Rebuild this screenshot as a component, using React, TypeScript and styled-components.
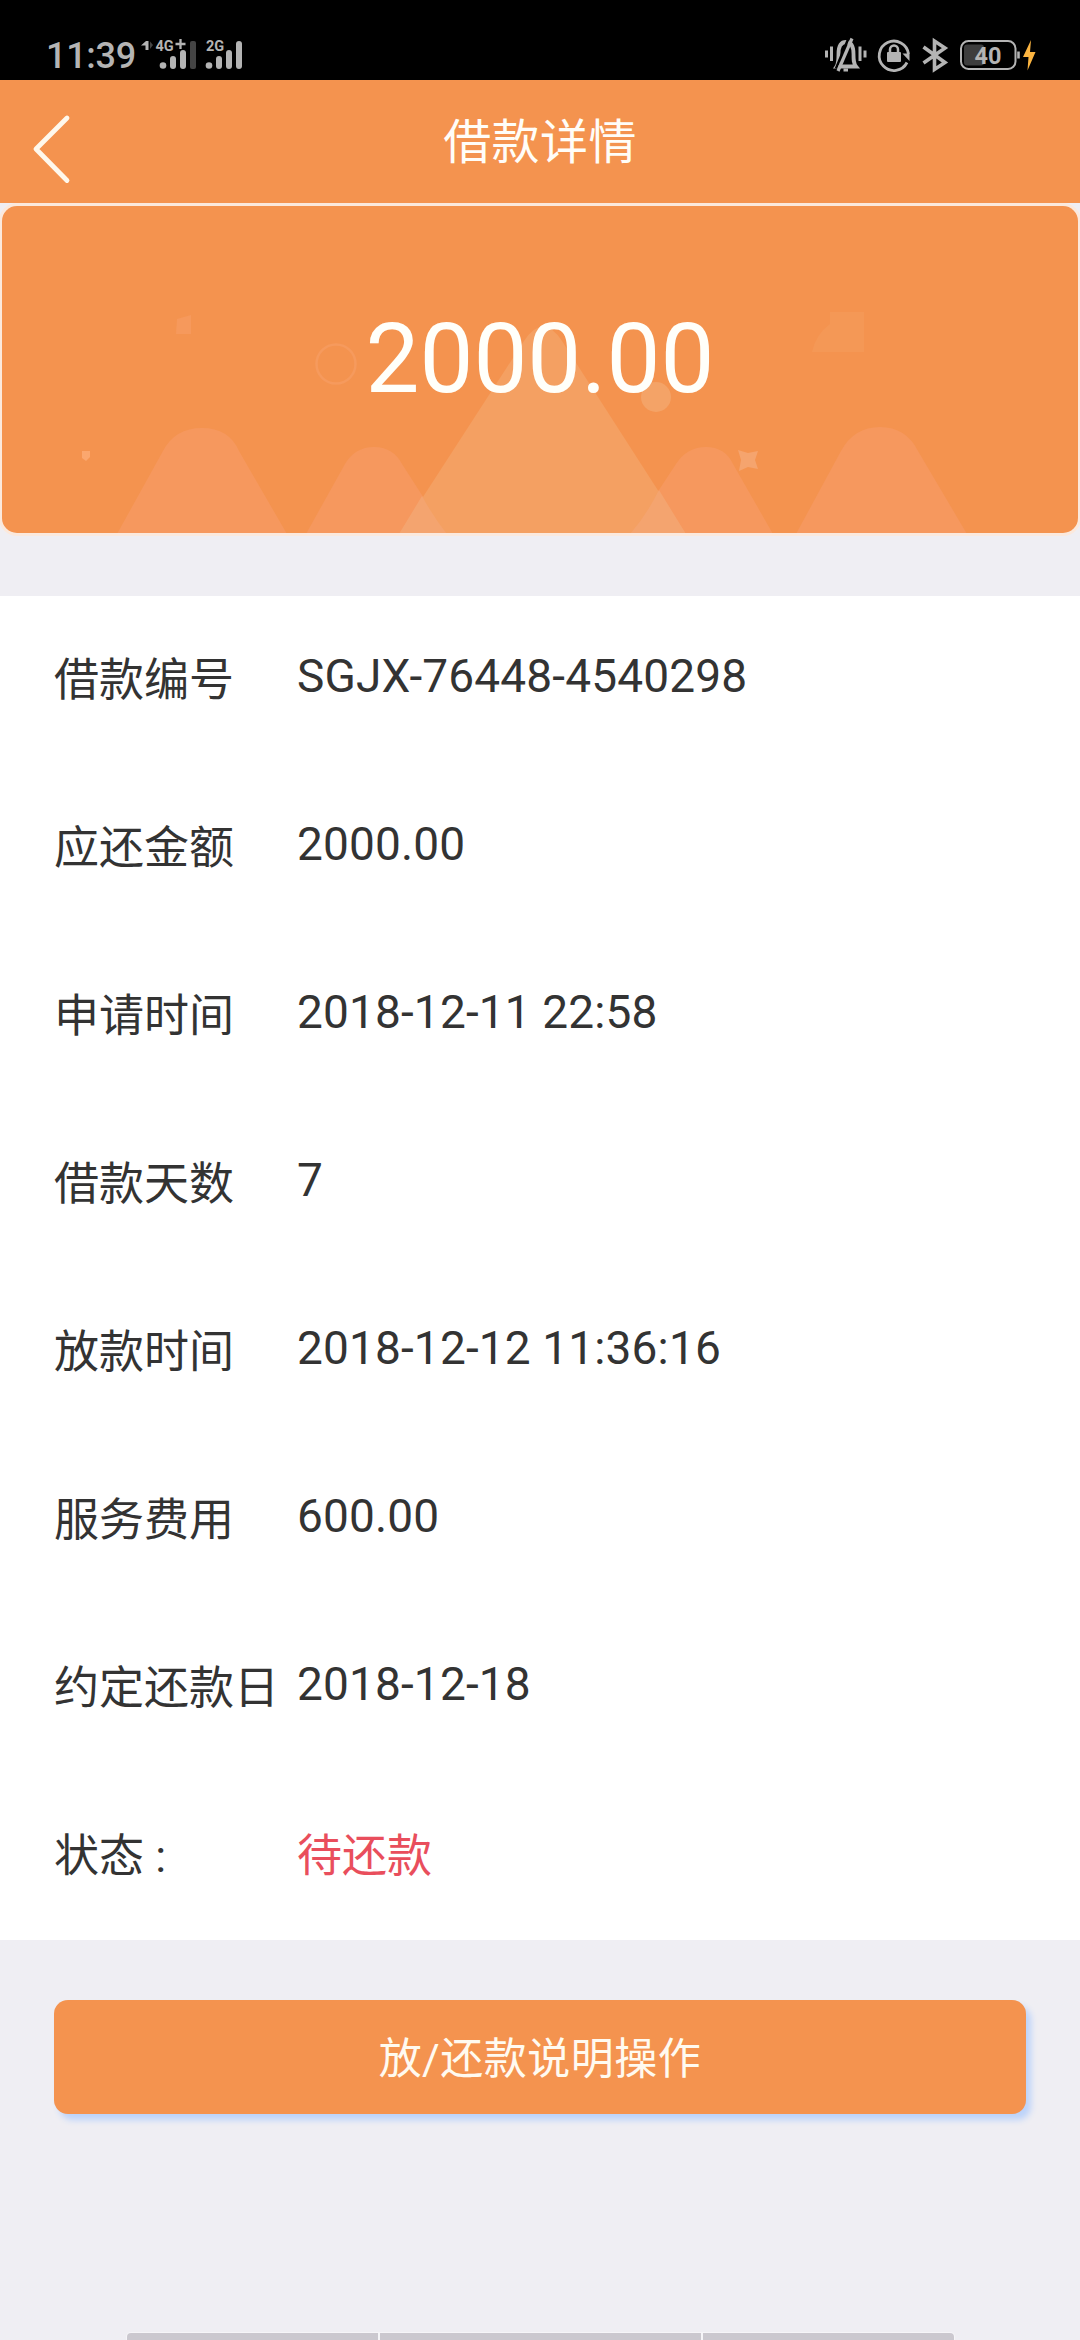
import React from 'react';
import styled, { createGlobalStyle } from 'styled-components';

const GlobalStyle = createGlobalStyle`
  * { box-sizing: border-box; }
  body {
    margin: 0;
    background: #efeef3;
    font-family: Roboto, "Noto Sans CJK SC", sans-serif;
  }
`;

const Screen = styled.div`
  width: 1080px;
  height: 2340px;
  display: flex;
  flex-direction: column;
  overflow: hidden;
  background: #efeef3;
`;

const StatusBar = styled.header`
  flex: none;
  height: 80px;
  padding: 0 43px 0 46px;
  display: flex;
  justify-content: space-between;
  background: #000;
  color: #b4b4b4;
`;

const StatusGroup = styled.div`
  display: flex;
`;

const Clock = styled.span`
  width: 94px;
  padding-top: 35px;
  font-size: 36px;
  font-weight: 500;
  line-height: 43px;
  letter-spacing: -0.3px;
`;

const StatusIcons = styled.svg`
  display: block;
  height: 80px;
`;

const NavBar = styled.nav`
  flex: none;
  height: 123px;
  display: grid;
  grid-template-columns: 240px 1fr 240px;
  background: #f4934f;
`;

const BackButton = styled.button`
  display: flex;
  align-items: flex-start;
  padding: 33px 0 0 31px;
  border: 0;
  background: none;
`;

const Title = styled.h1`
  margin: 0;
  padding-top: 27px;
  text-align: center;
  font-size: 48px;
  line-height: 72px;
  font-weight: 400;
  letter-spacing: 0.4px;
  color: #fffdf8;
`;

const Banner = styled.section`
  flex: none;
  height: 327px;
  margin: 3px 2px 0;
  display: grid;
  border-radius: 15px;
  overflow: hidden;
  background: #f4934f;
  box-shadow: 0 0 0 3px #fbe9dd;

  > * { grid-area: 1 / 1; }
`;

const Amount = styled.div`
  z-index: 1;
  padding-top: 97px;
  text-align: center;
  font-size: 96px;
  line-height: 112px;
  color: #fffffa;
`;

const Details = styled.dl`
  flex: none;
  margin: 63px 0 0;
  background: #fff;
`;

const Row = styled.div`
  height: 168px;
  padding-left: 54px;
  display: grid;
  grid-template-columns: 243px 1fr;
  color: #333;
  line-height: 66px;
`;

const Label = styled.dt`
  padding-top: 52px;
  font-size: 45px;
  white-space: nowrap;
`;

const Value = styled.dd<{ $alert?: boolean }>`
  margin: 0;
  padding-top: ${p => (p.$alert ? 52 : 47)}px;
  font-size: ${p => (p.$alert ? 45 : 46)}px;
  letter-spacing: ${p => (p.$alert ? 0 : 0.15)}px;
  color: ${p => (p.$alert ? '#e94e5c' : 'inherit')};
`;

const HelpButton = styled.button`
  flex: none;
  width: 972px;
  height: 114px;
  margin: 60px 0 0 54px;
  padding: 0 0 5px;
  border: 0;
  border-radius: 14px;
  background: #f4934f;
  box-shadow: 5px 6px 6px #bcd3fa;
  font-family: inherit;
  font-size: 43px;
  letter-spacing: 0.5px;
  color: #fffaf0;
`;

const GestureBar = styled.footer`
  margin-top: auto;
  height: 7px;
  padding: 0 126px 0 127px;
  display: grid;
  grid-template-columns: 251px 1fr 251px;
  gap: 2px;
`;

const GestureSegment = styled.span<{ $edge?: 'left' | 'right' }>`
  background: #cbc8cf;
  border-radius: ${p =>
    p.$edge === 'left' ? '4px 0 0 0' : p.$edge === 'right' ? '0 4px 0 0' : '0'};
  box-shadow: 0 0 0 1px #f6f5f8;
`;

const rows: { label: string; value: string; alert?: boolean }[] = [
  { label: '借款编号', value: 'SGJX-76448-4540298' },
  { label: '应还金额', value: '2000.00' },
  { label: '申请时间', value: '2018-12-11 22:58' },
  { label: '借款天数', value: '7' },
  { label: '放款时间', value: '2018-12-12 11:36:16' },
  { label: '服务费用', value: '600.00' },
  { label: '约定还款日', value: '2018-12-18' },
  { label: '状态 :', value: '待还款', alert: true },
];

function SignalIcons() {
  return (
    <StatusIcons width="120" viewBox="140 0 120 80" fill="#b4b4b4">
      <path d="M141 45.500l5-4.500h2.500v9h-3v-4.500z" />
      <path d="M150 41.500l3 3.500-3 4z" fill="#444" />
      <text x="155.500" y="50.500" fontSize="14.500" fontWeight="700" fontFamily="Roboto, sans-serif">4G</text>
      <path d="M180.500 39v10M175.500 44h10" stroke="#b4b4b4" strokeWidth="2.300" />
      <circle cx="163" cy="65.500" r="3.300" />
      <rect x="170" y="56" width="6" height="13" rx="3" />
      <rect x="180" y="50" width="6" height="19" rx="3" />
      <rect x="190" y="41" width="6" height="28" rx="2" fill="#444" />
      <text x="206" y="50.500" fontSize="14.500" fontWeight="700" fontFamily="Roboto, sans-serif">2G</text>
      <circle cx="209" cy="65.500" r="3.300" />
      <rect x="216" y="56" width="6" height="13" rx="3" />
      <rect x="226" y="50" width="6" height="19" rx="3" />
      <rect x="236" y="41" width="6" height="28" rx="3" />
    </StatusIcons>
  );
}

function DeviceIcons() {
  return (
    <StatusIcons width="215" viewBox="822 0 215 80" fill="none" stroke="#b4b4b4">
      <path d="M826.500 50.500v7M831.500 46.500v14.500M860 46.500v14.500M865 50.500v7" strokeWidth="3" />
      <path d="M836.500 66.500h19.500c-2.500-3-2.500-6-2.500-12.500 0-7-2-12-7.500-12s-7.500 5-7.500 12c0 6.500 0 9.500-2 12.500z" strokeWidth="3.800" />
      <path d="M836 68.500l12-29" stroke="#000" strokeWidth="2.500" />
      <path d="M838 71l14-32.500" strokeWidth="3.200" />
      <path d="M843.500 70h4.500" strokeWidth="3" />
      <path d="M907 62.500A14.700 14.700 0 1 1 908.500 54" strokeWidth="2.800" />
      <path d="M902.500 53.500h7v7.500z" fill="#b4b4b4" stroke="none" />
      <rect x="887" y="52" width="14" height="10" rx="1" fill="#b4b4b4" stroke="none" />
      <path d="M890 53v-3.500a4 4 0 0 1 8 0V53" strokeWidth="2.500" />
      <path d="M923.500 47l21.500 15.500-10.500 7V41l10.500 7-21.500 15" strokeWidth="3.600" />
      <rect x="964" y="44.500" width="20" height="21" rx="3" fill="#3d3d3d" stroke="none" />
      <rect x="961" y="41" width="54.500" height="28" rx="7.500" strokeWidth="2" />
      <path d="M1018.500 51.500v7" strokeWidth="2.600" />
      <text x="974.500" y="64" fontSize="23.500" fontWeight="700" fontFamily="Roboto, sans-serif" fill="#b4b4b4" stroke="none">40</text>
      <path d="M1031 40l-8 17h5.500l-1 13.500 8-18.500h-5.500z" fill="#fbb440" stroke="none" />
    </StatusIcons>
  );
}

function BannerArt() {
  return (
    <svg width="1076" height="327" viewBox="2 206 1076 327" fill="none">
      <g fill="#f6985e">
        <path d="M117 534L163 451Q175 428 202 428T239 451L287 534z" />
        <path d="M306 534L345 464Q355 447 374 447T402 464L447 534z" />
        <path d="M630 534L676 464Q687 447 706 447T733 464L773 534z" />
        <path d="M796 534L841 451Q854 427 880 427T918 451L967 534z" />
      </g>
      <path d="M399 534L524 341Q543 312 562 341L686 534z" fill="#f4a062" />
      <path d="M399 534L422 496Q434 518 447 534zM630 534Q646 516 659 490L686 534z" fill="#f4a46f" />
      <path d="M177 319l14-4v19h-15z" fill="#f6995c" />
      <path d="M82 451h8v6l-4 4-4-3z" fill="#fba76e" />
      <circle cx="336" cy="364" r="19.500" stroke="#f69a5d" strokeWidth="2.500" />
      <circle cx="656" cy="397" r="15" fill="#f4a367" />
      <path d="M738 450l10 3 10-2-3 9 3 9-10-2-9 4 2-11z" fill="#f5a46e" />
      <path d="M830 312h34v40h-52q4-18 18-28z" fill="#f49856" />
    </svg>
  );
}

export default function App() {
  return (
    <>
      <GlobalStyle />
      <Screen>
        <StatusBar>
          <StatusGroup>
            <Clock>11:39</Clock>
            <SignalIcons />
          </StatusGroup>
          <DeviceIcons />
        </StatusBar>
        <NavBar>
          <BackButton aria-label="返回">
            <svg width="42" height="72" viewBox="0 0 42 72" fill="none">
              <path d="M36 5L5 36l31 31.500" stroke="#fff8ec" strokeWidth="4.800" strokeLinecap="round" strokeLinejoin="round" />
            </svg>
          </BackButton>
          <Title>借款详情</Title>
        </NavBar>
        <Banner>
          <BannerArt />
          <Amount>2000.00</Amount>
        </Banner>
        <Details>
          {rows.map(r => (
            <Row key={r.label}>
              <Label>{r.label}</Label>
              <Value $alert={r.alert}>{r.value}</Value>
            </Row>
          ))}
        </Details>
        <HelpButton>放/还款说明操作</HelpButton>
        <GestureBar>
          <GestureSegment $edge="left" />
          <GestureSegment />
          <GestureSegment $edge="right" />
        </GestureBar>
      </Screen>
    </>
  );
}
